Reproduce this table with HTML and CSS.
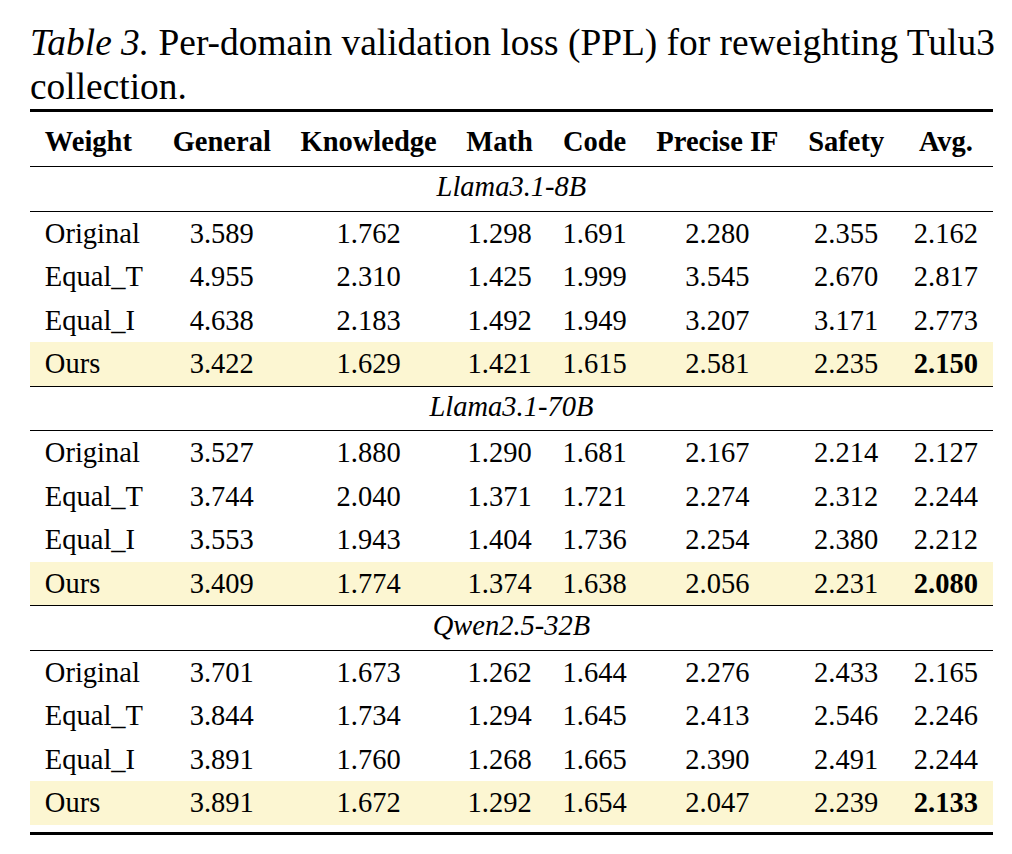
FILE: index.html
```html
<!DOCTYPE html>
<html>
<head>
<meta charset="utf-8">
<link rel="stylesheet" href="styles.css">
</head>
<body>
<div class="page">
  <p class="caption"><span class="cap-label">Table 3.</span> Per-domain validation loss (PPL) for reweighting Tulu3 collection.</p>
  <table class="results">
    <thead>
      <tr class="head">
        <th class="name">Weight</th><th>General</th><th>Knowledge</th><th>Math</th><th>Code</th><th>Precise IF</th><th>Safety</th><th>Avg.</th>
      </tr>
    </thead>
    <tbody>
      <tr class="section"><td colspan="8">Llama3.1-8B</td></tr>
      <tr><td class="name">Original</td><td>3.589</td><td>1.762</td><td>1.298</td><td>1.691</td><td>2.280</td><td>2.355</td><td>2.162</td></tr>
      <tr><td class="name">Equal_T</td><td>4.955</td><td>2.310</td><td>1.425</td><td>1.999</td><td>3.545</td><td>2.670</td><td>2.817</td></tr>
      <tr><td class="name">Equal_I</td><td>4.638</td><td>2.183</td><td>1.492</td><td>1.949</td><td>3.207</td><td>3.171</td><td>2.773</td></tr>
      <tr class="ours ruled"><td class="name">Ours</td><td>3.422</td><td>1.629</td><td>1.421</td><td>1.615</td><td>2.581</td><td>2.235</td><td><b>2.150</b></td></tr>
      <tr class="section"><td colspan="8">Llama3.1-70B</td></tr>
      <tr><td class="name">Original</td><td>3.527</td><td>1.880</td><td>1.290</td><td>1.681</td><td>2.167</td><td>2.214</td><td>2.127</td></tr>
      <tr><td class="name">Equal_T</td><td>3.744</td><td>2.040</td><td>1.371</td><td>1.721</td><td>2.274</td><td>2.312</td><td>2.244</td></tr>
      <tr><td class="name">Equal_I</td><td>3.553</td><td>1.943</td><td>1.404</td><td>1.736</td><td>2.254</td><td>2.380</td><td>2.212</td></tr>
      <tr class="ours ruled"><td class="name">Ours</td><td>3.409</td><td>1.774</td><td>1.374</td><td>1.638</td><td>2.056</td><td>2.231</td><td><b>2.080</b></td></tr>
      <tr class="section"><td colspan="8">Qwen2.5-32B</td></tr>
      <tr><td class="name">Original</td><td>3.701</td><td>1.673</td><td>1.262</td><td>1.644</td><td>2.276</td><td>2.433</td><td>2.165</td></tr>
      <tr><td class="name">Equal_T</td><td>3.844</td><td>1.734</td><td>1.294</td><td>1.645</td><td>2.413</td><td>2.546</td><td>2.246</td></tr>
      <tr><td class="name">Equal_I</td><td>3.891</td><td>1.760</td><td>1.268</td><td>1.665</td><td>2.390</td><td>2.491</td><td>2.244</td></tr>
      <tr class="ours"><td class="name">Ours</td><td>3.891</td><td>1.672</td><td>1.292</td><td>1.654</td><td>2.047</td><td>2.239</td><td><b>2.133</b></td></tr>
    </tbody>
  </table>
</div>
</body>
</html>
```

FILE: styles.css
```css
html, body {
  margin: 0;
  padding: 0;
  background: #ffffff;
}

body {
  font-family: "Liberation Serif", "Times New Roman", serif;
  color: #000000;
}

.page {
  padding: 21px 0 0 30px;
}

.caption {
  margin: 0;
  width: 980px;
  font-size: 37.4px;
  line-height: 44px;
}

.cap-label {
  font-style: italic;
}

.results {
  border-collapse: separate;
  border-spacing: 0;
  border-top: 3px solid #000;
  border-bottom: 3px solid #000;
  padding-bottom: 7px;
  font-size: 28.5px;
  margin-top: 0;
}

.results th,
.results td {
  padding: 0 14.85px;
  text-align: center;
  white-space: nowrap;
  line-height: 43.5px;
}

.results .name {
  text-align: left;
}

.head th {
  font-weight: bold;
  padding-top: 6px;
  line-height: 48px;
  border-bottom: 1px solid #000;
}

.section td {
  font-style: italic;
  line-height: 40.5px;
  padding-bottom: 3px;
  border-bottom: 1px solid #000;
}

.ours td {
  background: #fcf6d2;
}

.ruled td {
  border-bottom: 1px solid #000;
}
```
